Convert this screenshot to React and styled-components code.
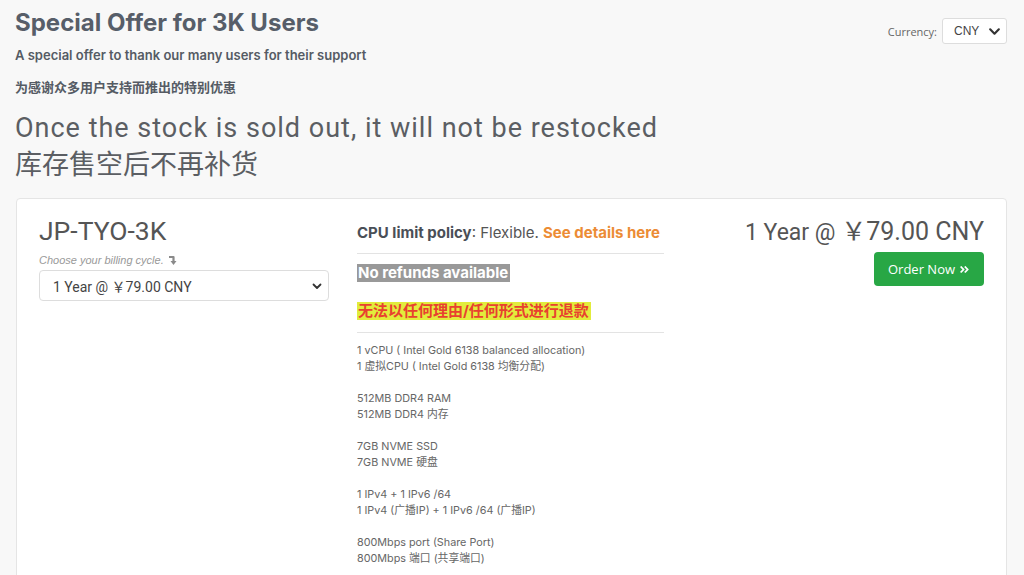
import React from 'react';
import styled, { createGlobalStyle } from 'styled-components';
import { FaAngleDoubleRight } from 'react-icons/fa';

const GlobalStyle = createGlobalStyle`
  html, body {
    margin: 0;
    padding: 0;
    background: #f8f8f8;
  }
  body {
    font-family: Inter, "Noto Sans CJK SC", sans-serif;
    color: #555;
  }
`;

const Page = styled.div`
  width: 1024px;
  height: 575px;
  overflow: hidden;
  padding: 0 17px 0 15px;
  box-sizing: border-box;
`;

const Header = styled.header`
  display: flex;
  justify-content: space-between;
  align-items: flex-start;
`;

const Title = styled.h1`
  margin: 8px 0 0;
  font-size: 24px;
  font-weight: 700;
  color: #575e69;
  line-height: 30px;
`;

const Subtitle = styled.p`
  margin: ${({ $top }) => $top} 0 0;
  font-size: 13px;
  font-weight: 600;
  color: #555b64;
  line-height: 18px;
`;

const CurrencyBox = styled.div`
  display: flex;
  align-items: center;
  gap: 5px;
  margin-top: 18px;
  font-family: "Open Sans", sans-serif;
  font-size: 11px;
  color: #666;
`;

const SmallSelect = styled.div`
  display: flex;
  align-items: center;
  justify-content: space-between;
  width: 65px;
  height: 26px;
  box-sizing: border-box;
  padding: 0 5px 0 11px;
  background: #fff;
  border: 1px solid #ddd;
  border-radius: 3px;
  font-family: "Liberation Sans", sans-serif;
  font-size: 12px;
  color: #444;
`;

const Notice = styled.div`
  margin-top: 14px;
  font-family: Roboto, "Noto Sans CJK SC", sans-serif;
  font-size: 27px;
  line-height: 37px;
  color: #5b5e63;
`;

const Spaced = styled.span`
  letter-spacing: 1px;
`;

const Card = styled.section`
  margin: 14px 0 0 1px;
  background: #fff;
  border: 1px solid #e5e5e5;
  border-radius: 4px;
  padding: 16px 22px 20px;
  display: grid;
  grid-template-columns: 290px 307px 1fr;
  column-gap: 28px;
`;

const Column = styled.div`
  display: flex;
  flex-direction: column;
  align-items: ${({ $align }) => $align || 'stretch'};
`;

const ProductName = styled.h2`
  margin: 1px 0 0;
  font-family: Roboto, sans-serif;
  font-size: 26.5px;
  font-weight: 400;
  color: #555;
  line-height: 30px;
`;

const Hint = styled.div`
  margin-top: 7px;
  font-family: "Liberation Sans", sans-serif;
  font-style: italic;
  font-size: 11px;
  color: #999;
  display: flex;
  align-items: center;
  gap: 4px;
  line-height: 14px;
`;

const CycleSelect = styled.div`
  margin-top: 3px;
  height: 31px;
  box-sizing: border-box;
  border: 1px solid #ddd;
  border-radius: 4px;
  display: flex;
  align-items: center;
  justify-content: space-between;
  padding: 0 5px 0 13px;
  font-family: Roboto, "Noto Sans CJK SC", sans-serif;
  font-size: 14px;
  color: #444;
`;

const Policy = styled.div`
  margin-top: 8px;
  font-size: 15px;
  color: #555;
  line-height: 20px;
  b { color: #4a4f57; font-weight: 700; }
  a { color: #ec8c35; font-weight: 700; text-decoration: none; }
`;

const Rule = styled.hr`
  margin: ${({ $m }) => $m};
  border: 0;
  border-top: 1px solid #e3e3e3;
`;

const Tag = styled.span`
  align-self: flex-start;
  font-size: 15px;
  font-weight: 700;
  line-height: 18px;
  padding: 0 2px 0 1px;
  color: ${({ $fg }) => $fg};
  background: ${({ $bg }) => $bg};
`;

const TagGap = styled.div`
  height: 20px;
`;

const Specs = styled.div`
  margin-top: 10px;
  font-size: 10.8px;
  line-height: 16px;
  color: #666;
  p { margin: 0 0 16px; }
`;

const Price = styled.div`
  margin-top: 2px;
  font-family: Roboto, "Noto Sans CJK SC", sans-serif;
  font-size: 23px;
  line-height: 30px;
  color: #555;
  span { font-size: 25px; }
`;

const OrderButton = styled.button`
  margin-top: 4px;
  width: 110px;
  height: 34px;
  border: 0;
  border-radius: 4px;
  background: #28a745;
  color: #fff;
  font-family: "Open Sans", sans-serif;
  font-size: 13px;
  display: flex;
  align-items: center;
  justify-content: center;
  gap: 4px;
`;

const Chevron = () => (
  <svg width="13" height="13" viewBox="0 0 12 12">
    <polyline points="2,4 6,8 10,4" fill="none" stroke="#333" strokeWidth="2" strokeLinecap="round" strokeLinejoin="round" />
  </svg>
);

const SmallChevron = () => (
  <svg width="12" height="12" viewBox="0 0 12 12">
    <polyline points="2.5,4.5 6,8 9.5,4.5" fill="none" stroke="#333" strokeWidth="1.8" strokeLinecap="round" strokeLinejoin="round" />
  </svg>
);

const TurnDownArrow = () => (
  <svg width="10" height="12" viewBox="0 0 10 12">
    <path d="M1 3 H5.5 V8" fill="none" stroke="#8a8a8a" strokeWidth="2.2" strokeLinejoin="round" />
    <polygon points="2.5,7 8.5,7 5.5,11" fill="#8a8a8a" />
  </svg>
);

const specs = [
  ['1 vCPU ( Intel Gold 6138 balanced allocation)', '1 虚拟CPU ( Intel Gold 6138 均衡分配)'],
  ['512MB DDR4 RAM', '512MB DDR4 内存'],
  ['7GB NVME SSD', '7GB NVME 硬盘'],
  ['1 IPv4 + 1 IPv6 /64', '1 IPv4 (广播IP) + 1 IPv6 /64 (广播IP)'],
  ['800Mbps port (Share Port)', '800Mbps 端口 (共享端口)'],
];

export default function App() {
  return (
    <>
      <GlobalStyle />
      <Page>
        <Header>
          <div>
            <Title>Special Offer for 3K Users</Title>
            <Subtitle $top="8px">A special offer to thank our many users for their support</Subtitle>
            <Subtitle $top="14px">为感谢众多用户支持而推出的特别优惠</Subtitle>
          </div>
          <CurrencyBox>
            Currency:
            <SmallSelect>
              CNY
              <Chevron />
            </SmallSelect>
          </CurrencyBox>
        </Header>
        <Notice>
          <Spaced>Once the stock is sold out, it will not be restocked</Spaced>
          <br />
          库存售空后不再补货
        </Notice>
        <Card>
          <Column>
            <ProductName>JP-TYO-3K</ProductName>
            <Hint>
              Choose your billing cycle.
              <TurnDownArrow />
            </Hint>
            <CycleSelect>
              1 Year @ ￥79.00 CNY
              <SmallChevron />
            </CycleSelect>
          </Column>
          <Column>
            <Policy>
              <b>CPU limit policy</b>: Flexible. <a href="#">See details here</a>
            </Policy>
            <Rule $m="10px 0 10px" />
            <Tag $fg="#fff" $bg="#999">No refunds available</Tag>
            <TagGap />
            <Tag $fg="#e8412f" $bg="#e2ec3c">无法以任何理由/任何形式进行退款</Tag>
            <Rule $m="12px 0 0" />
            <Specs>
              {specs.map(([en, zh]) => (
                <p key={en}>
                  {en}
                  <br />
                  {zh}
                </p>
              ))}
            </Specs>
          </Column>
          <Column $align="flex-end">
            <Price>
              1 Year @ <span>￥79.00 CNY</span>
            </Price>
            <OrderButton>
              Order Now
              <FaAngleDoubleRight size={11} />
            </OrderButton>
          </Column>
        </Card>
      </Page>
    </>
  );
}
